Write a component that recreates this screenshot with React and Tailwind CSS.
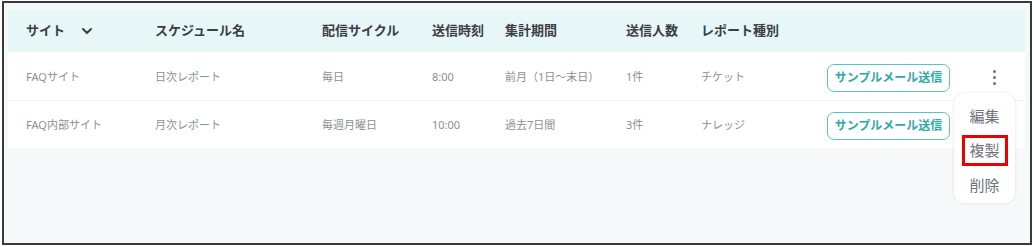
import { ChevronDown } from 'lucide-react';

const rows = [
    { site: 'FAQサイト', name: '日次レポート', cycle: '毎日', time: '8:00', period: '前月（1日～末日）', count: '1件', type: 'チケット' },
    { site: 'FAQ内部サイト', name: '月次レポート', cycle: '毎週月曜日', time: '10:00', period: '過去7日間', count: '3件', type: 'ナレッジ' },
];

// column widths measured from the screenshot
const cols = ['w-[147px] pl-[18px]', 'w-[167px]', 'w-[110px]', 'w-[73px]', 'w-[121px]', 'w-[75px]', 'w-[126px]'];

function Kebab() {
    return (
        <div className="flex flex-col items-center gap-[3px]">
            <span className="w-[3px] h-[3px] rounded-full bg-[#6b6f76]" />
            <span className="w-[3px] h-[3px] rounded-full bg-[#6b6f76]" />
            <span className="w-[3px] h-[3px] rounded-full bg-[#6b6f76]" />
        </div>
    );
}

export default function App() {
    const headers = ['サイト', 'スケジュール名', '配信サイクル', '送信時刻', '集計期間', '送信人数', 'レポート種別'];

    return (
        <div className="w-[1034px] h-[247px] bg-white pt-[1px] px-[2px] font-['Noto_Sans','Noto_Sans_CJK_JP',sans-serif]">
            <div className="relative h-[244px] border-2 border-[#3a3a3a] bg-[#f7f8fa] pl-[4px] pr-[5px] pt-[7px]">
                {/* Header */}
                <div className="flex items-center h-[42px] bg-[#e7f6f6] text-[13px] font-bold text-[#3b3f45]">
                    {headers.map((h, i) => (
                        <div key={h} className={`${cols[i]} flex items-center`}>
                            {h}
                            {i === 0 && <ChevronDown size={16} strokeWidth={3} className="ml-[14px] text-[#3b3f45]" />}
                        </div>
                    ))}
                </div>

                {/* Rows */}
                {rows.map((r, idx) => (
                    <div
                        key={r.name}
                        className={`flex items-center bg-white text-[11px] text-[#8b9098] ${idx === 0 ? 'h-[49px] pt-[3px] border-b border-[#f0f2f4]' : 'h-[47px] pt-[2px]'}`}
                    >
                        <div className={cols[0]}>{r.site}</div>
                        <div className={cols[1]}>{r.name}</div>
                        <div className={cols[2]}>{r.cycle}</div>
                        <div className={cols[3]}>{r.time}</div>
                        <div className={cols[4]}>{r.period}</div>
                        <div className={cols[5]}>{r.count}</div>
                        <div className={cols[6]}>{r.type}</div>
                        <div className="w-[166px]">
                            <button className="w-[123px] h-[28px] rounded-[7px] border-[1.5px] border-[#5cc3c5] text-[12px] font-bold text-[#2fa8ab]">
                                サンプルメール送信
                            </button>
                        </div>
                        <div className="w-[2px] flex justify-center">
                            {idx === 0 && <Kebab />}
                        </div>
                    </div>
                ))}

                {/* Action menu */}
                <div className="absolute left-[950px] top-[90px] w-[61px] h-[110px] bg-white rounded-[10px] shadow-[0_0_3px_rgba(0,0,0,0.12)] flex flex-col items-center pt-[8px] text-[15px] text-[#6e737b]">
                    <div className="h-[30px] flex items-center">編集</div>
                    <div className="h-[31px] w-[46px] mt-[4px] flex items-center justify-center border-[3px] border-[#ee0000]">複製</div>
                    <div className="h-[30px] mt-[4px] flex items-center">削除</div>
                </div>
            </div>
        </div>
    );
}
